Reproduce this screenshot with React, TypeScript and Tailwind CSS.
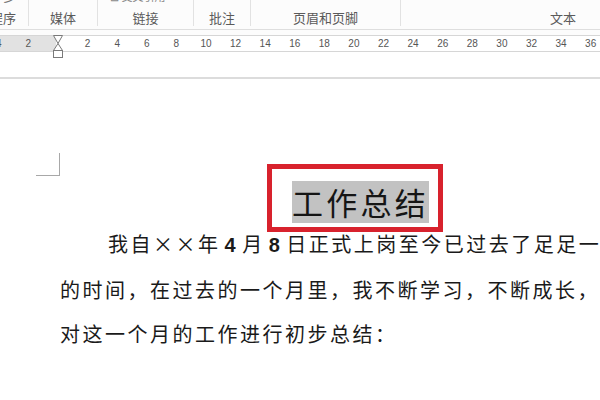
import React from "react";

const rulerLabels = ["4", "2", "", "2", "4", "6", "8", "10", "12", "14", "16", "18", "20", "22", "24", "26", "28", "30", "32", "34", "36", "38"];

function Hourglass() {
  return (
    <svg width="12" height="24" viewBox="0 0 12 24" className="absolute left-[9px] top-[-1px]">
      <path d="M1.5 0.5 H10.5 L6 8.5 Z" fill="#fff" stroke="#7a7a7a" strokeWidth="1" />
      <path d="M6 8.5 L10.5 15.5 H1.5 Z" fill="#fff" stroke="#7a7a7a" strokeWidth="1" />
      <rect x="1.5" y="15.5" width="9" height="7" fill="#fff" stroke="#7a7a7a" strokeWidth="1" />
    </svg>
  );
}

function Divider() {
  return <div className="w-px h-[26px] bg-[#e2e2e2] shrink-0" />;
}

export default function App() {
  return (
    <div className="w-[600px] h-[400px] overflow-hidden bg-white font-['Noto_Sans_CJK_SC','Liberation_Sans',sans-serif] text-[#1a1a1a]">
      {/* Ribbon group labels */}
      <div className="h-[30px] border-b border-[#dedede] bg-[#fcfcfc] flex items-start overflow-hidden text-[13px] text-[#5a5a5a]">
        <div className="w-[28px] shrink-0 h-[29px] flex flex-col justify-between items-end pr-[12px] pb-[3px] overflow-hidden">
          <div className="h-[4px] overflow-hidden"><div className="-mt-[12px] leading-[16px] text-[#777]">多</div></div>
          <div className="leading-[16px] whitespace-nowrap">程序</div>
        </div>
        <Divider />
        <div className="w-[68px] shrink-0 h-[29px] flex flex-col justify-end items-center pb-[3px]">
          <div className="leading-[16px]">媒体</div>
        </div>
        <Divider />
        <div className="w-[95px] shrink-0 h-[29px] flex flex-col justify-between items-center pb-[3px]">
          <div className="h-[4px] overflow-hidden w-full pl-[12px]">
            <div className="-mt-[11px] leading-[14px] text-[11px] text-[#888] whitespace-nowrap">⊟ 交叉引用</div>
          </div>
          <div className="leading-[16px]">链接</div>
        </div>
        <Divider />
        <div className="w-[56px] shrink-0 h-[29px] flex flex-col justify-end items-center pb-[3px]">
          <div className="leading-[16px]">批注</div>
        </div>
        <Divider />
        <div className="w-[149px] shrink-0 h-[29px] flex flex-col justify-end items-center pb-[3px]">
          <div className="leading-[16px]">页眉和页脚</div>
        </div>
        <Divider />
        <div className="w-[324px] shrink-0 h-[29px] flex flex-col justify-end items-center pb-[3px]">
          <div className="leading-[16px]">文本</div>
        </div>
      </div>

      {/* Ruler */}
      <div className="h-[5px] bg-[#fcfcfc]" />
      <div className="h-[17px] border-y border-[#d6d6d6] bg-[linear-gradient(to_right,#e2e2e2_56px,#ffffff_56px)] flex overflow-visible">
        <div className="flex -ml-[16px] shrink-0">
          {rulerLabels.map((l, i) => (
            <div key={i} className="w-[29.6px] shrink-0 text-center text-[10px] leading-[15px] text-[#555] font-['Liberation_Sans',sans-serif] relative">
              {i === 2 ? <Hourglass /> : l}
            </div>
          ))}
        </div>
      </div>
      <div className="h-[27px] border-b-2 border-[#dcdcdc] bg-white" />

      {/* Document page */}
      <div className="bg-white">
        <div className="flex items-start mt-[74px]">
          <div className="ml-[36px] w-[24px] h-[23px] border-r border-b border-[#a8a8a8] shrink-0" />
          <div className="ml-[207px] mt-[11px] -mb-[10px] w-[176px] h-[68px] border-[5px] border-[#d8222d] shrink-0 pl-[20px] pt-[12px]">
            <div className="w-[137px] h-[42px] bg-[#c2c2c2] text-[31px] leading-[42px] tracking-[3.25px] text-[#151515] whitespace-nowrap">
              工作总结
            </div>
          </div>
        </div>
        <div className="ml-[60px] text-[20px] leading-[44.5px] tracking-[2.5px] whitespace-nowrap">
          <div className="pl-[48px]">
            我自××年<span className="inline-block px-[4px] font-['Liberation_Sans',sans-serif] font-bold">4</span>月<span className="inline-block px-[4px] font-['Liberation_Sans',sans-serif] font-bold">8</span>日正式上岗至今已过去了足足一个月
          </div>
          <div>的时间，在过去的一个月里，我不断学习，不断成长，现将</div>
          <div>对这一个月的工作进行初步总结：</div>
        </div>
      </div>
    </div>
  );
}
